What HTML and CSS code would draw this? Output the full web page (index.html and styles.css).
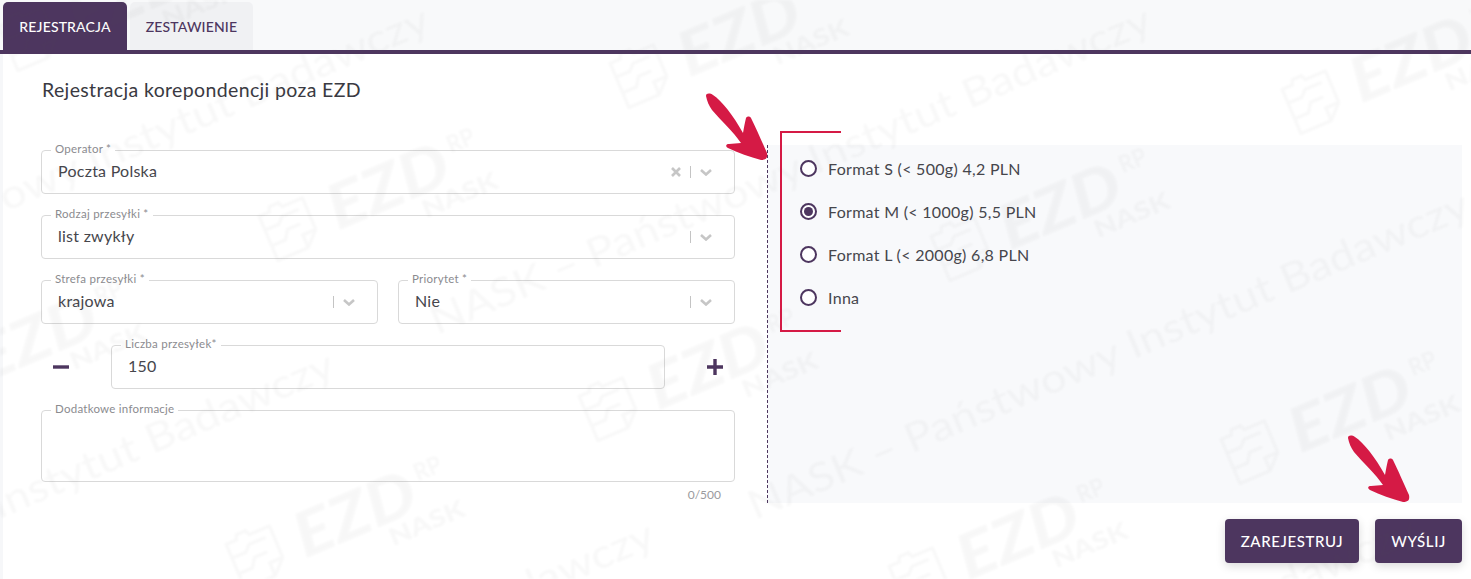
FILE: index.html
```html
<!DOCTYPE html>
<html lang="pl">
<head>
    <meta charset="UTF-8">
    <title>Rejestracja korespondencji</title>
    <link rel="stylesheet" href="styles.css">
</head>
<body>
    <header class="tabs">
        <button class="tab tab-active" type="button">Rejestracja</button>
        <button class="tab" type="button">Zestawienie</button>
    </header>

    <main class="content">
        <h1 class="title">Rejestracja korepondencji poza EZD</h1>

        <div class="columns">
            <form class="form-col">
                <div class="field">
                    <span class="field-label">Operator *</span>
                    <span class="value">Poczta Polska</span>
                    <svg class="clear" viewBox="0 0 10 10"><path d="M1 1l8 8M9 1l-8 8"/></svg>
                    <span class="sep"></span>
                    <svg class="chevron" viewBox="0 0 12 7"><path d="M1 1l5 4.5L11 1"/></svg>
                </div>
                <div class="field">
                    <span class="field-label">Rodzaj przesyłki *</span>
                    <span class="value">list zwykły</span>
                    <span class="sep"></span>
                    <svg class="chevron" viewBox="0 0 12 7"><path d="M1 1l5 4.5L11 1"/></svg>
                </div>
                <div class="row">
                    <div class="field">
                        <span class="field-label">Strefa przesyłki *</span>
                        <span class="value">krajowa</span>
                        <span class="sep"></span>
                        <svg class="chevron" viewBox="0 0 12 7"><path d="M1 1l5 4.5L11 1"/></svg>
                    </div>
                    <div class="field">
                        <span class="field-label">Priorytet *</span>
                        <span class="value">Nie</span>
                        <span class="sep"></span>
                        <svg class="chevron" viewBox="0 0 12 7"><path d="M1 1l5 4.5L11 1"/></svg>
                    </div>
                </div>
                <div class="counter-row">
                    <svg class="step" viewBox="0 0 16 16"><path d="M0 8h16"/></svg>
                    <div class="field field-count">
                        <span class="field-label">Liczba przesyłek*</span>
                        <span class="value">150</span>
                    </div>
                    <svg class="step" viewBox="0 0 16 16"><path d="M0 8h16M8 0v16"/></svg>
                </div>
                <div class="field field-area">
                    <span class="field-label">Dodatkowe informacje</span>
                </div>
                <div class="char-count">0/500</div>
            </form>

            <section class="format-col">
                <div class="radio-item"><span class="radio"></span>Format S (&lt; 500g) 4,2 PLN</div>
                <div class="radio-item"><span class="radio radio-on"></span>Format M (&lt; 1000g) 5,5 PLN</div>
                <div class="radio-item"><span class="radio"></span>Format L (&lt; 2000g) 6,8 PLN</div>
                <div class="radio-item"><span class="radio"></span>Inna</div>
            </section>
        </div>

        <div class="actions">
            <button class="btn" type="button">Zarejestruj</button>
            <button class="btn" type="button">Wyślij</button>
        </div>
    </main>

    <div class="bracket"></div>

    <svg class="arrows" viewBox="0 0 1471 579">
        <defs>
            <path id="arrow" d="M706 96C706 93 710 93 713 95C722 101 733 115 743 133C744 127 745 122 746 118C747 116 750 116 751 118C756 128 762 142 767 153C768 158 766 160 761 160C750 157 738 153 728 148C725 146 726 144 729 144L741 143C733 131 722 122 712 110C709 106 707 101 706 96Z"/>
        </defs>
        <use href="#arrow"/>
        <use href="#arrow" transform="translate(642 342)"/>
    </svg>

    <svg class="watermark" viewBox="0 0 1471 579">
        <defs>
            <g id="mark">
                <path class="mark-line" d="M-25 -20L-14 -20L-12 -25L-2 -25L0 -20L22 -20L22 14L8 28L-25 28Z"/>
                <path class="mark-line" d="M8 28L8 14L22 14"/>
                <path class="mark-line" d="M-25 -5L-10 -5L-4 -11L14 -11M-25 12L-10 12L-4 3L10 3"/>
                <text class="mark-ezd" x="42" y="24" textLength="127" lengthAdjust="spacingAndGlyphs">EZD</text>
                <text class="mark-rp" x="176" y="-3" textLength="28" lengthAdjust="spacingAndGlyphs">RP</text>
                <text class="mark-nask" x="128" y="47" textLength="80" lengthAdjust="spacingAndGlyphs">NASK</text>
            </g>
            <text id="line" class="mark-text" textLength="779" lengthAdjust="spacingAndGlyphs">NASK – Państwowy Instytut Badawczy</text>
        </defs>
        <use href="#mark" transform="translate(30 35) rotate(-23)"/>
        <use href="#mark" transform="translate(641 72) rotate(-23)"/>
        <use href="#mark" transform="translate(1313 98) rotate(-23)"/>
        <use href="#mark" transform="translate(290 225) rotate(-23)"/>
        <use href="#mark" transform="translate(962 245) rotate(-23)"/>
        <use href="#mark" transform="translate(-62 377) rotate(-23)"/>
        <use href="#mark" transform="translate(610 405) rotate(-23)"/>
        <use href="#mark" transform="translate(1252 448) rotate(-23)"/>
        <use href="#mark" transform="translate(257 553) rotate(-23)"/>
        <use href="#mark" transform="translate(920 575) rotate(-23)"/>
        <use href="#line" transform="translate(-285 335) rotate(-23)"/>
        <use href="#line" transform="translate(437 335) rotate(-23)"/>
        <use href="#line" transform="translate(755 520) rotate(-23)"/>
        <use href="#line" transform="translate(-380 680) rotate(-23)"/>
        <use href="#line" transform="translate(-60 850) rotate(-23)"/>
        <use href="#line" transform="translate(703 845) rotate(-23)"/>
    </svg>
</body>
</html>
```

FILE: styles.css
```css
html, body {
    height: 100%;
}

body {
    margin: 0;
    overflow: hidden;
    position: relative;
    background-color: #f6f7f9;
    font-family: Lato, "Noto Sans", sans-serif;
    color: #46464c;
}

.tabs {
    display: flex;
    gap: 3px;
    height: 48px;
    padding: 2px 0 0 3px;
    background-color: #f8f9fa;
    border-bottom: 4px solid #4d365f;
}

.tab {
    width: 123px;
    border: none;
    border-radius: 5px 5px 0 0;
    background-color: #f0f1f3;
    color: #4d365f;
    font-family: inherit;
    font-size: 14px;
    font-weight: 500;
    letter-spacing: 0.15px;
    text-transform: uppercase;
}

.tab-active {
    width: 124px;
    background-color: #4d365f;
    color: #fff;
}

.content {
    margin-left: 3px;
    height: 525px;
    padding: 0 9px 0 38px;
    background-color: #fff;
}

.title {
    margin: 0;
    padding: 24px 0 0 1px;
    height: 66px;
    box-sizing: border-box;
    font-size: 19.5px;
    font-weight: 400;
    line-height: 24px;
    letter-spacing: 0.36px;
    color: #3a3a42;
}

.columns {
    display: flex;
    height: 358px;
    margin-top: 25px;
}

.form-col {
    width: 694px;
    margin-right: 32px;
    padding-top: 5px;
    display: flex;
    flex-direction: column;
    gap: 21px;
}

.field {
    position: relative;
    display: flex;
    align-items: center;
    height: 44px;
    padding: 0 22px 0 16px;
    box-sizing: border-box;
    border: 1px solid #d9d9d9;
    border-radius: 4px;
    font-size: 16px;
    letter-spacing: 0.25px;
}

.field-label {
    position: absolute;
    left: 9px;
    top: -9px;
    padding: 0 4px;
    background-color: #fff;
    font-size: 11.5px;
    line-height: 13px;
    letter-spacing: 0.25px;
    color: #8b8b8f;
}

.value {
    flex: 1;
    padding-bottom: 4px;
}

.clear {
    width: 10px;
    height: 10px;
    margin-right: 9px;
}

.clear path,
.chevron path {
    fill: none;
    stroke: #c6c6c6;
    stroke-width: 2.6px;
}

.sep {
    width: 1px;
    height: 12px;
    margin-right: 9px;
    background-color: #c4c4c4;
}

.chevron {
    width: 12px;
    height: 7px;
}

.row {
    display: flex;
    gap: 20px;
}

.row .field {
    flex: 1;
}

.counter-row {
    display: flex;
    align-items: center;
    padding-left: 12px;
}

.field-count {
    flex: 0 0 554px;
    margin: 0 42px;
}

.step {
    width: 16px;
    height: 16px;
}

.step path {
    fill: none;
    stroke: #4d365f;
    stroke-width: 3.4px;
}

.field-area {
    height: 72px;
}

.char-count {
    margin-top: -15px;
    padding-right: 14px;
    text-align: right;
    font-size: 12px;
    line-height: 14px;
    color: #9a9a9e;
}

.format-col {
    flex: 1;
    padding: 2px 0 0 32px;
    background-color: #f8f9fb;
    border-left: 1px dashed #4d365f;
}

.radio-item {
    display: flex;
    align-items: center;
    height: 43px;
    font-size: 16px;
    letter-spacing: 0.3px;
}

.radio {
    width: 13px;
    height: 13px;
    margin-right: 11px;
    border: 2px solid #4d365f;
    border-radius: 50%;
    background-color: #fff;
    display: flex;
    align-items: center;
    justify-content: center;
}

.radio-on::after {
    content: "";
    width: 9px;
    height: 9px;
    border-radius: 50%;
    background-color: #4d365f;
}

.actions {
    display: flex;
    justify-content: flex-end;
    gap: 16px;
    margin-top: 16px;
}

.btn {
    height: 44px;
    padding: 0 16px;
    border: none;
    border-radius: 4px;
    background-color: #4d365f;
    box-shadow: 0 3px 10px rgba(0, 0, 0, 0.15);
    color: #fff;
    font-family: inherit;
    font-size: 15px;
    font-weight: 500;
    letter-spacing: 0.6px;
    text-transform: uppercase;
}

.bracket {
    position: absolute;
    left: 780px;
    top: 131px;
    width: 59px;
    height: 197px;
    border: 2px solid #d51a45;
    border-right: none;
}

.arrows,
.watermark {
    position: absolute;
    left: 0;
    top: 0;
    width: 1471px;
    height: 579px;
    pointer-events: none;
}

.arrows {
    fill: #d51a45;
}

.watermark {
    filter: blur(0.8px);
    opacity: 0.04;
}

.mark-line {
    fill: none;
    stroke: #555;
    stroke-width: 3px;
}

.mark-text,
.mark-ezd,
.mark-rp,
.mark-nask {
    fill: #555;
    font-family: Lato, sans-serif;
}

.mark-text {
    font-size: 40px;
}

.mark-ezd {
    font-size: 62px;
    font-weight: 900;
    font-style: italic;
}

.mark-rp {
    font-size: 24px;
    font-weight: 700;
}

.mark-nask {
    font-size: 24px;
    font-weight: 900;
}
```
